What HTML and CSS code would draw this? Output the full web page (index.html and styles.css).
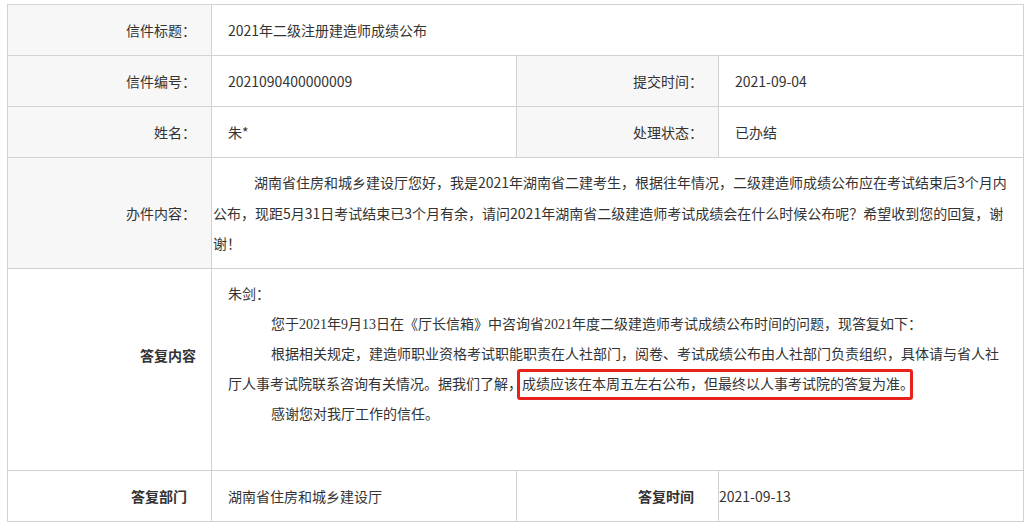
FILE: index.html
```html
<!DOCTYPE html>
<html lang="zh-CN">
<head>
<meta charset="utf-8">
<title>信件详情</title>
<link rel="stylesheet" href="styles.css">
</head>
<body>
<div class="page">
  <table class="letter">
    <colgroup>
      <col class="c1"><col class="c2"><col class="c3"><col class="c4">
    </colgroup>
    <tr class="row">
      <th class="label">信件标题：</th>
      <td class="value" colspan="3">2021年二级注册建造师成绩公布</td>
    </tr>
    <tr class="row">
      <th class="label">信件编号：</th>
      <td class="value">2021090400000009</td>
      <th class="label">提交时间：</th>
      <td class="value">2021-09-04</td>
    </tr>
    <tr class="row">
      <th class="label">姓名：</th>
      <td class="value">朱*</td>
      <th class="label">处理状态：</th>
      <td class="value">已办结</td>
    </tr>
    <tr class="row-content">
      <th class="label">办件内容：</th>
      <td class="content" colspan="3">湖南省住房和城乡建设厅您好，我是2021年湖南省二建考生，根据往年情况，二级建造师成绩公布应在考试结束后3个月内公布，现距5月31日考试结束已3个月有余，请问2021年湖南省二级建造师考试成绩会在什么时候公布呢？希望收到您的回复，谢谢！</td>
    </tr>
    <tr class="row-reply">
      <th class="label-bold label-reply">答复内容</th>
      <td class="reply" colspan="3">
        <p class="greet">朱剑：</p>
        <p class="para">您于2021年9月13日在《厅长信箱》中咨询省2021年度二级建造师考试成绩公布时间的问题，现答复如下：</p>
        <p class="para">根据相关规定，建造师职业资格考试职能职责在人社部门，阅卷、考试成绩公布由人社部门负责组织，具体请与省人社厅人事考试院联系咨询有关情况。据我们了解，<span class="mark">成绩应该在本周五左右公布，但最终以人事考试院的答复为准。</span></p>
        <p class="para">感谢您对我厅工作的信任。</p>
      </td>
    </tr>
    <tr class="row">
      <th class="label-bold label-foot">答复部门</th>
      <td class="value">湖南省住房和城乡建设厅</td>
      <th class="label-bold label-foot">答复时间</th>
      <td class="value value-flush">2021-09-13</td>
    </tr>
  </table>
</div>
</body>
</html>
```

FILE: styles.css
```css
html, body {
  margin: 0;
  padding: 0;
  background: #ffffff;
}

body {
  font-family: "Noto Sans CJK SC", "Noto Sans", sans-serif;
  font-size: 14px;
  color: #333333;
}

.page {
  padding: 4px 8px 0 7px;
}

.letter {
  border-collapse: collapse;
  table-layout: fixed;
  width: 1016px;
}

.c1 { width: 204px; }
.c2 { width: 305px; }
.c3 { width: 202px; }
.c4 { width: 305px; }

.letter th,
.letter td {
  border: 1px solid #d2d2d2;
  padding: 0;
  font-weight: normal;
  vertical-align: middle;
}

.row { height: 51px; }
.row-content { height: 111px; }
.row-reply { height: 202px; }

.label {
  background: #f7f7f7;
  text-align: right;
  padding-right: 15px !important;
  color: #333333;
}

.label-bold {
  background: #ffffff;
  text-align: right;
  font-weight: bold !important;
  color: #333333;
}

.label-reply {
  vertical-align: top !important;
  padding-top: 71px !important;
  padding-right: 15px !important;
  line-height: 30px;
}

.label-foot {
  padding-right: 24px !important;
}

.value {
  padding-left: 16px !important;
  text-align: left;
}

.value-flush {
  padding-left: 0 !important;
}

.content {
  padding: 0 8px 0 1px !important;
  text-indent: 41px;
  line-height: 30.5px;
}

.reply {
  vertical-align: top !important;
  padding: 11px 17px 0 16px !important;
  font-family: "Liberation Serif", "Noto Sans CJK SC", serif;
  line-height: 30px;
}

.reply p {
  margin: 0;
}

.para {
  text-indent: 43px;
}

.mark {
  position: relative;
}

.mark::after {
  content: "";
  position: absolute;
  left: -5px;
  right: 1px;
  top: -8px;
  bottom: -8px;
  border: 3px solid #e8211b;
  border-radius: 3px;
  pointer-events: none;
}
```
